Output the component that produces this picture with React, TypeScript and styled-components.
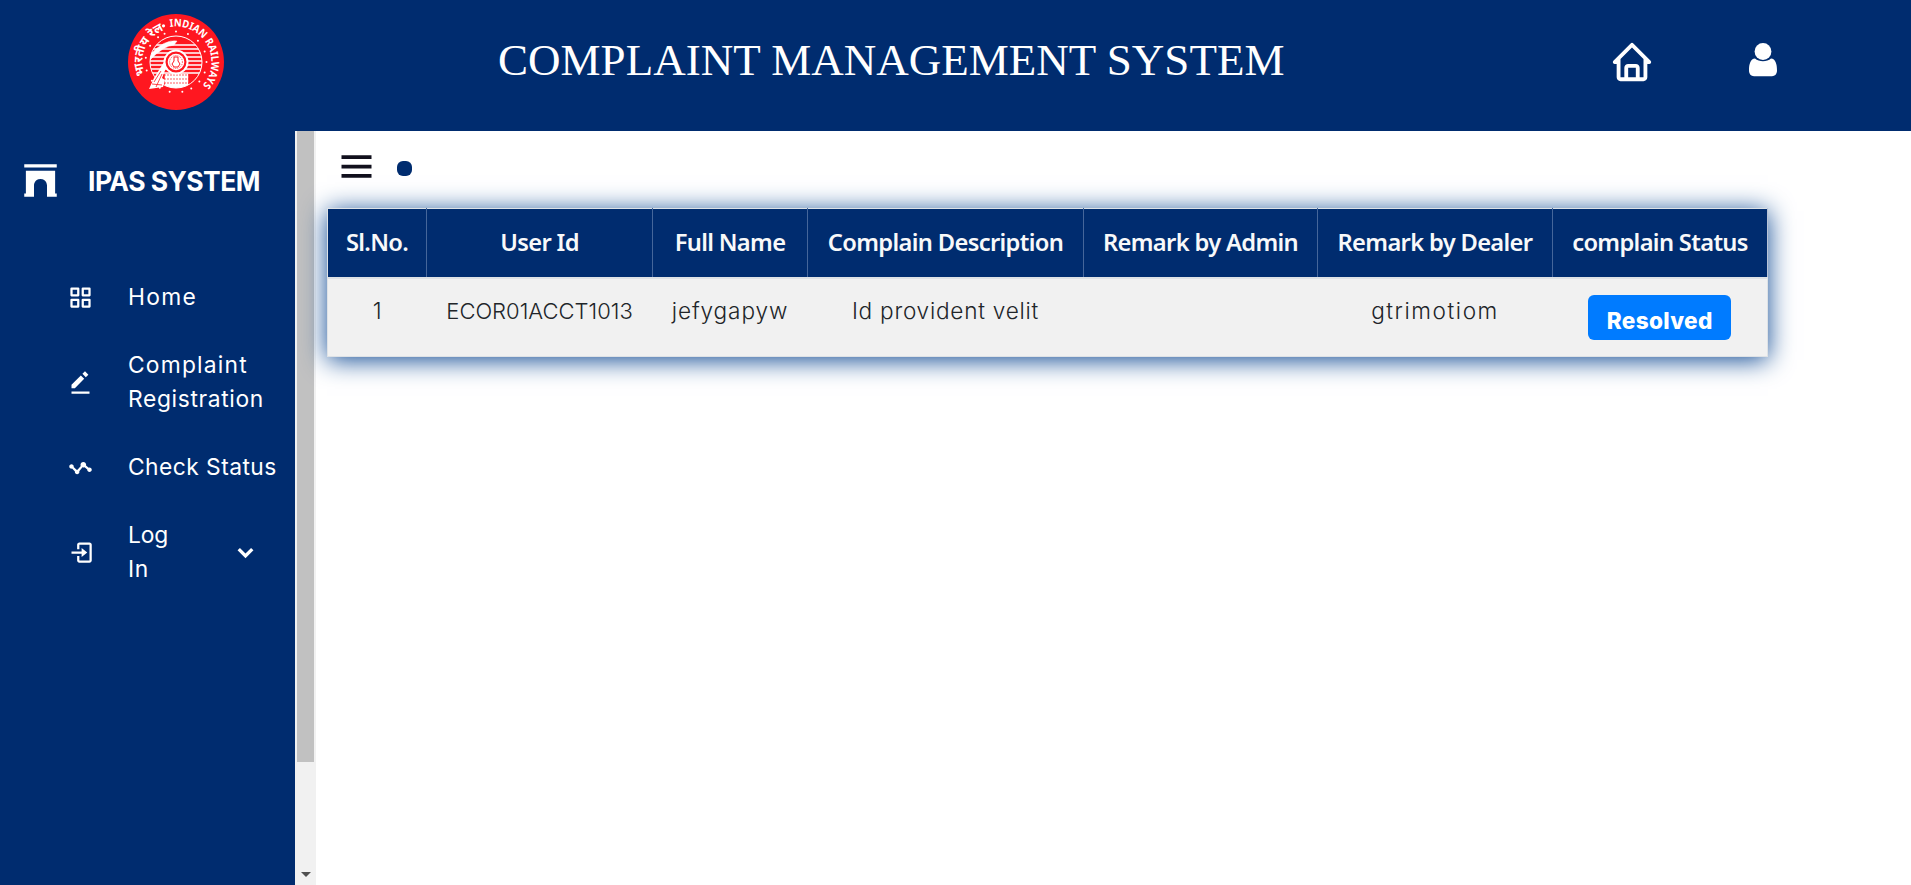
import React from 'react';
import styled, { createGlobalStyle } from 'styled-components';
import {
  BiGridAlt,
  BiHome,
  BiLogIn,
  BiMenu,
  BiSolidArch,
  BiSolidChevronDown,
  BiSolidEditAlt,
  BiStats,
} from 'react-icons/bi';

const navy = '#002c6f';

const GlobalStyle = createGlobalStyle`
  * { box-sizing: border-box; }
  body {
    margin: 0;
    overflow: hidden;
    background: #fff;
    font-family: Inter, 'Liberation Sans', sans-serif;
  }
`;

const Page = styled.div`
  display: flex;
  flex-direction: column;
  height: 100vh;
`;

const Header = styled.header`
  display: flex;
  align-items: flex-start;
  flex: none;
  height: 131px;
  padding-left: 128px;
  background: ${navy};
  color: #fff;
`;

const Logo = styled.svg`
  flex: none;
  width: 96px;
  height: 96px;
  margin-top: 14px;
  overflow: visible;
`;

const Title = styled.h1`
  flex: none;
  width: 1111px;
  margin: 34px 0 0 274px;
  font: 400 45px/52px 'Liberation Serif', serif;
  letter-spacing: 0.02px;
  white-space: nowrap;
`;

const HeaderLink = styled.a<{ $user?: boolean }>`
  display: flex;
  flex: none;
  margin-top: ${(p) => (p.$user ? 43 : 39)}px;
  margin-left: ${(p) => (p.$user ? 94 : 0)}px;
  color: #fff;
`;

const Body = styled.div`
  display: flex;
  flex: 1;
  min-height: 0;
`;

const Sidebar = styled.aside`
  flex: none;
  width: 295px;
  background: ${navy};
  color: #fff;
`;

const Brand = styled.div`
  display: flex;
  align-items: center;
  gap: 28px;
  height: 99px;
  padding-left: 21px;
  font-size: 26.5px;
  font-weight: 700;
  letter-spacing: -0.55px;
  white-space: nowrap;

  svg { flex: none; }
`;

const Menu = styled.ul`
  display: flex;
  flex-direction: column;
  gap: 34px;
  margin: 50px 0 0;
  padding: 0;
  list-style: none;
`;

const MenuItem = styled.li`
  display: flex;
  align-items: center;
  padding-left: 67px;
  font-size: 22.8px;
  line-height: 34px;

  > svg { flex: none; }
`;

const MenuLabel = styled.span`
  margin-left: 34px;
  white-space: nowrap;
`;

const Line = styled.span<{ $track: number }>`
  display: block;
  letter-spacing: ${(p) => p.$track}px;
`;

const Caret = styled(BiSolidChevronDown)`
  margin-left: 64px;
`;

const ScrollTrack = styled.div`
  display: flex;
  flex: none;
  flex-direction: column;
  justify-content: space-between;
  align-items: center;
  width: 21px;
  padding-bottom: 8px;
  background: #f1f1f1;
`;

const ScrollThumb = styled.div`
  width: 17px;
  height: 631px;
  background: #c1c1c1;
`;

const ScrollArrow = styled.div`
  border: 5px solid transparent;
  border-top-color: #505050;
  border-bottom: 0;
`;

const Main = styled.main`
  flex: 1;
  padding: 12px 0 0 11px;
`;

const Toolbar = styled.div`
  display: flex;
  align-items: center;
  height: 46px;
  margin-bottom: 19px;
  padding-left: 7px;
  color: #11101d;
`;

const Dot = styled.span`
  width: 15px;
  height: 15px;
  margin: 4px 0 0 18px;
  border-radius: 6px;
  background: ${navy};
`;

const Table = styled.table`
  position: relative;
  width: 1440px;
  table-layout: fixed;
  border-collapse: collapse;
  border: 1px solid #dee2e6;
  background: #f1f1f1;
  box-shadow: 0 3px 24px #0d4893;
  color: #212529;
  text-align: center;
  white-space: nowrap;
`;

const Col = styled.col<{ $w: number }>`
  width: ${(p) => p.$w}px;
`;

const HeadCell = styled.th`
  height: 69px;
  padding: 0 0 2px;
  border-right: 1px solid #45669a;
  border-bottom: 2px solid #dee2e6;
  background: ${navy};
  color: #f8f9fa;
  font: 600 23.7px/34px 'Noto Sans', sans-serif;
  letter-spacing: -0.66px;

  &:last-child { border-right-color: #b8c3d6; }
`;

const Cell = styled.td<{ $size?: number; $track?: number }>`
  height: 79px;
  padding: 15px 0 0;
  font-size: ${(p) => p.$size ?? 22.6}px;
  font-weight: 300;
  line-height: 34px;
  letter-spacing: ${(p) => p.$track ?? 0}px;
  vertical-align: top;
`;

const Status = styled.span`
  display: block;
  width: 143px;
  height: 45px;
  margin: 1px auto 0;
  padding-top: 9px;
  border-radius: 6px;
  background: #007bff;
  color: #fff;
  font-weight: 800;
  letter-spacing: 0.3px;
`;

const starAngles = [-112, -90, -67, -44, -20, 0, 20, 40, 60, 78, 102, 122, 142, 164, 188, 212, 234];

function RailwayLogo() {
  return (
    <Logo viewBox="0 0 96 96" role="img">
      <defs>
        <path id="arcRight" d="M42 13 A35.5 35.5 0 0 1 75 71" />
        <path id="arcLeft" d="M17 61 A34 34 0 0 1 35 16.5" />
        <clipPath id="disc"><circle cx="48" cy="48" r="26" /></clipPath>
      </defs>
      <circle cx="48" cy="48" r="48" fill="#ff1720" />
      <g fill="#fff" fontFamily="'Noto Sans', sans-serif" fontWeight="700">
        <text fontSize="10.6" textLength="87" lengthAdjust="spacingAndGlyphs"><textPath href="#arcRight">INDIAN RAILWAYS</textPath></text>
        <text fontSize="12"><textPath href="#arcLeft">भारतीय रेल</textPath></text>
      </g>
      <circle cx="35.5" cy="11.8" r="1.6" fill="#fff" />
      {starAngles.map((a) => (
        <circle
          key={a}
          cx={48 + 30.5 * Math.cos((a * Math.PI) / 180)}
          cy={48 + 30.5 * Math.sin((a * Math.PI) / 180)}
          r="1"
          fill="#fff"
        />
      ))}
      <circle cx="48" cy="48" r="26" fill="none" stroke="#fff" strokeWidth="1" />
      <g clipPath="url(#disc)" stroke="#fff">
        <path d="M22 31H74M22 35H74M22 39H74M22 43H74M22 47H74M22 51H74M22 55H74M22 59H74" strokeWidth="1.3" />
        <path d="M22 41Q36 25 49 27L46 31Q35 32 22 46Z" fill="#fff" strokeWidth=".5" />
        <path d="M37 60H60V74H37Z" fill="#fff" strokeWidth=".5" />
        <path d="M36 61H61M36 65H62M36 69H61" stroke="#ff1720" strokeWidth=".7" strokeDasharray="2 1" />
      </g>
      <circle cx="48" cy="48" r="11.5" fill="#ff1720" stroke="#fff" strokeWidth="2" />
      <circle cx="48" cy="48" r="8.3" fill="#fff" />
      <circle cx="48" cy="48" r="6.4" fill="none" stroke="#ff1720" strokeWidth=".8" strokeDasharray="1 1" />
      <path d="M46 43H50V47L52 50L50 53H46L44 50L46 47Z" fill="none" stroke="#ff1720" strokeWidth="1" />
      <path d="M36 48L26 64L21 75L35 73L37 66L34 64L38 54Z" fill="#fff" />
      <path d="M33 57L26 68M34 60L28 73M24 70L34 71" stroke="#ff1720" strokeWidth=".8" />
    </Logo>
  );
}

function UserIcon() {
  return (
    <svg width="28" height="34" viewBox="0 0 28 34" fill="currentColor">
      <path d="M6 15.6C1.5 16 0 21 0 27.5C0 31 2 33.2 5 33.2H23C26 33.2 28 31 28 27.5C28 21 26.5 16 22 15.6C20 17.5 17 18.3 14 18.3S8 17.5 6 15.6Z" />
      <circle cx="14" cy="8.5" r="8.4" />
    </svg>
  );
}

const menu = [
  { icon: BiGridAlt, lines: [['Home', 1.3]] },
  { icon: BiSolidEditAlt, lines: [['Complaint', 1.2], ['Registration', 0.65]] },
  { icon: BiStats, lines: [['Check Status', 0.45]] },
  { icon: BiLogIn, lines: [['Log', -0.1], ['In', 0.7]], caret: true },
] as { icon: React.ComponentType<{ size: number }>; lines: [string, number][]; caret?: boolean }[];

const columns: [string, number][] = [
  ['Sl.No.', 99],
  ['User Id', 226],
  ['Full Name', 155],
  ['Complain Description', 276],
  ['Remark by Admin', 234],
  ['Remark by Dealer', 235],
  ['complain Status', 215],
];

export default function App() {
  return (
    <Page>
      <GlobalStyle />
      <Header>
        <RailwayLogo />
        <Title>COMPLAINT MANAGEMENT SYSTEM</Title>
        <HeaderLink><BiHome size={46} /></HeaderLink>
        <HeaderLink $user>
          <UserIcon />
        </HeaderLink>
      </Header>
      <Body>
        <Sidebar>
          <Brand>
            <BiSolidArch size={39} />
            <span>IPAS SYSTEM</span>
          </Brand>
          <Menu>
            {menu.map(({ icon: Icon, lines, caret }) => (
              <MenuItem key={lines[0][0]}>
                <Icon size={27} />
                <MenuLabel>
                  {lines.map(([text, track]) => <Line key={text} $track={track}>{text}</Line>)}
                </MenuLabel>
                {caret && <Caret size={27} />}
              </MenuItem>
            ))}
          </Menu>
        </Sidebar>
        <ScrollTrack>
          <ScrollThumb />
          <ScrollArrow />
        </ScrollTrack>
        <Main>
          <Toolbar>
            <BiMenu size={45} />
            <Dot />
          </Toolbar>
          <Table>
            <colgroup>{columns.map(([name, w]) => <Col key={name} $w={w} />)}</colgroup>
            <thead>
              <tr>{columns.map(([name]) => <HeadCell key={name}>{name}</HeadCell>)}</tr>
            </thead>
            <tbody>
              <tr>
                <Cell>1</Cell>
                <Cell $size={22}>ECOR01ACCT1013</Cell>
                <Cell $track={0.9}>jefygapyw</Cell>
                <Cell $track={0.75}>Id provident velit</Cell>
                <Cell />
                <Cell $track={1.55}>gtrimotiom</Cell>
                <Cell><Status>Resolved</Status></Cell>
              </tr>
            </tbody>
          </Table>
        </Main>
      </Body>
    </Page>
  );
}
